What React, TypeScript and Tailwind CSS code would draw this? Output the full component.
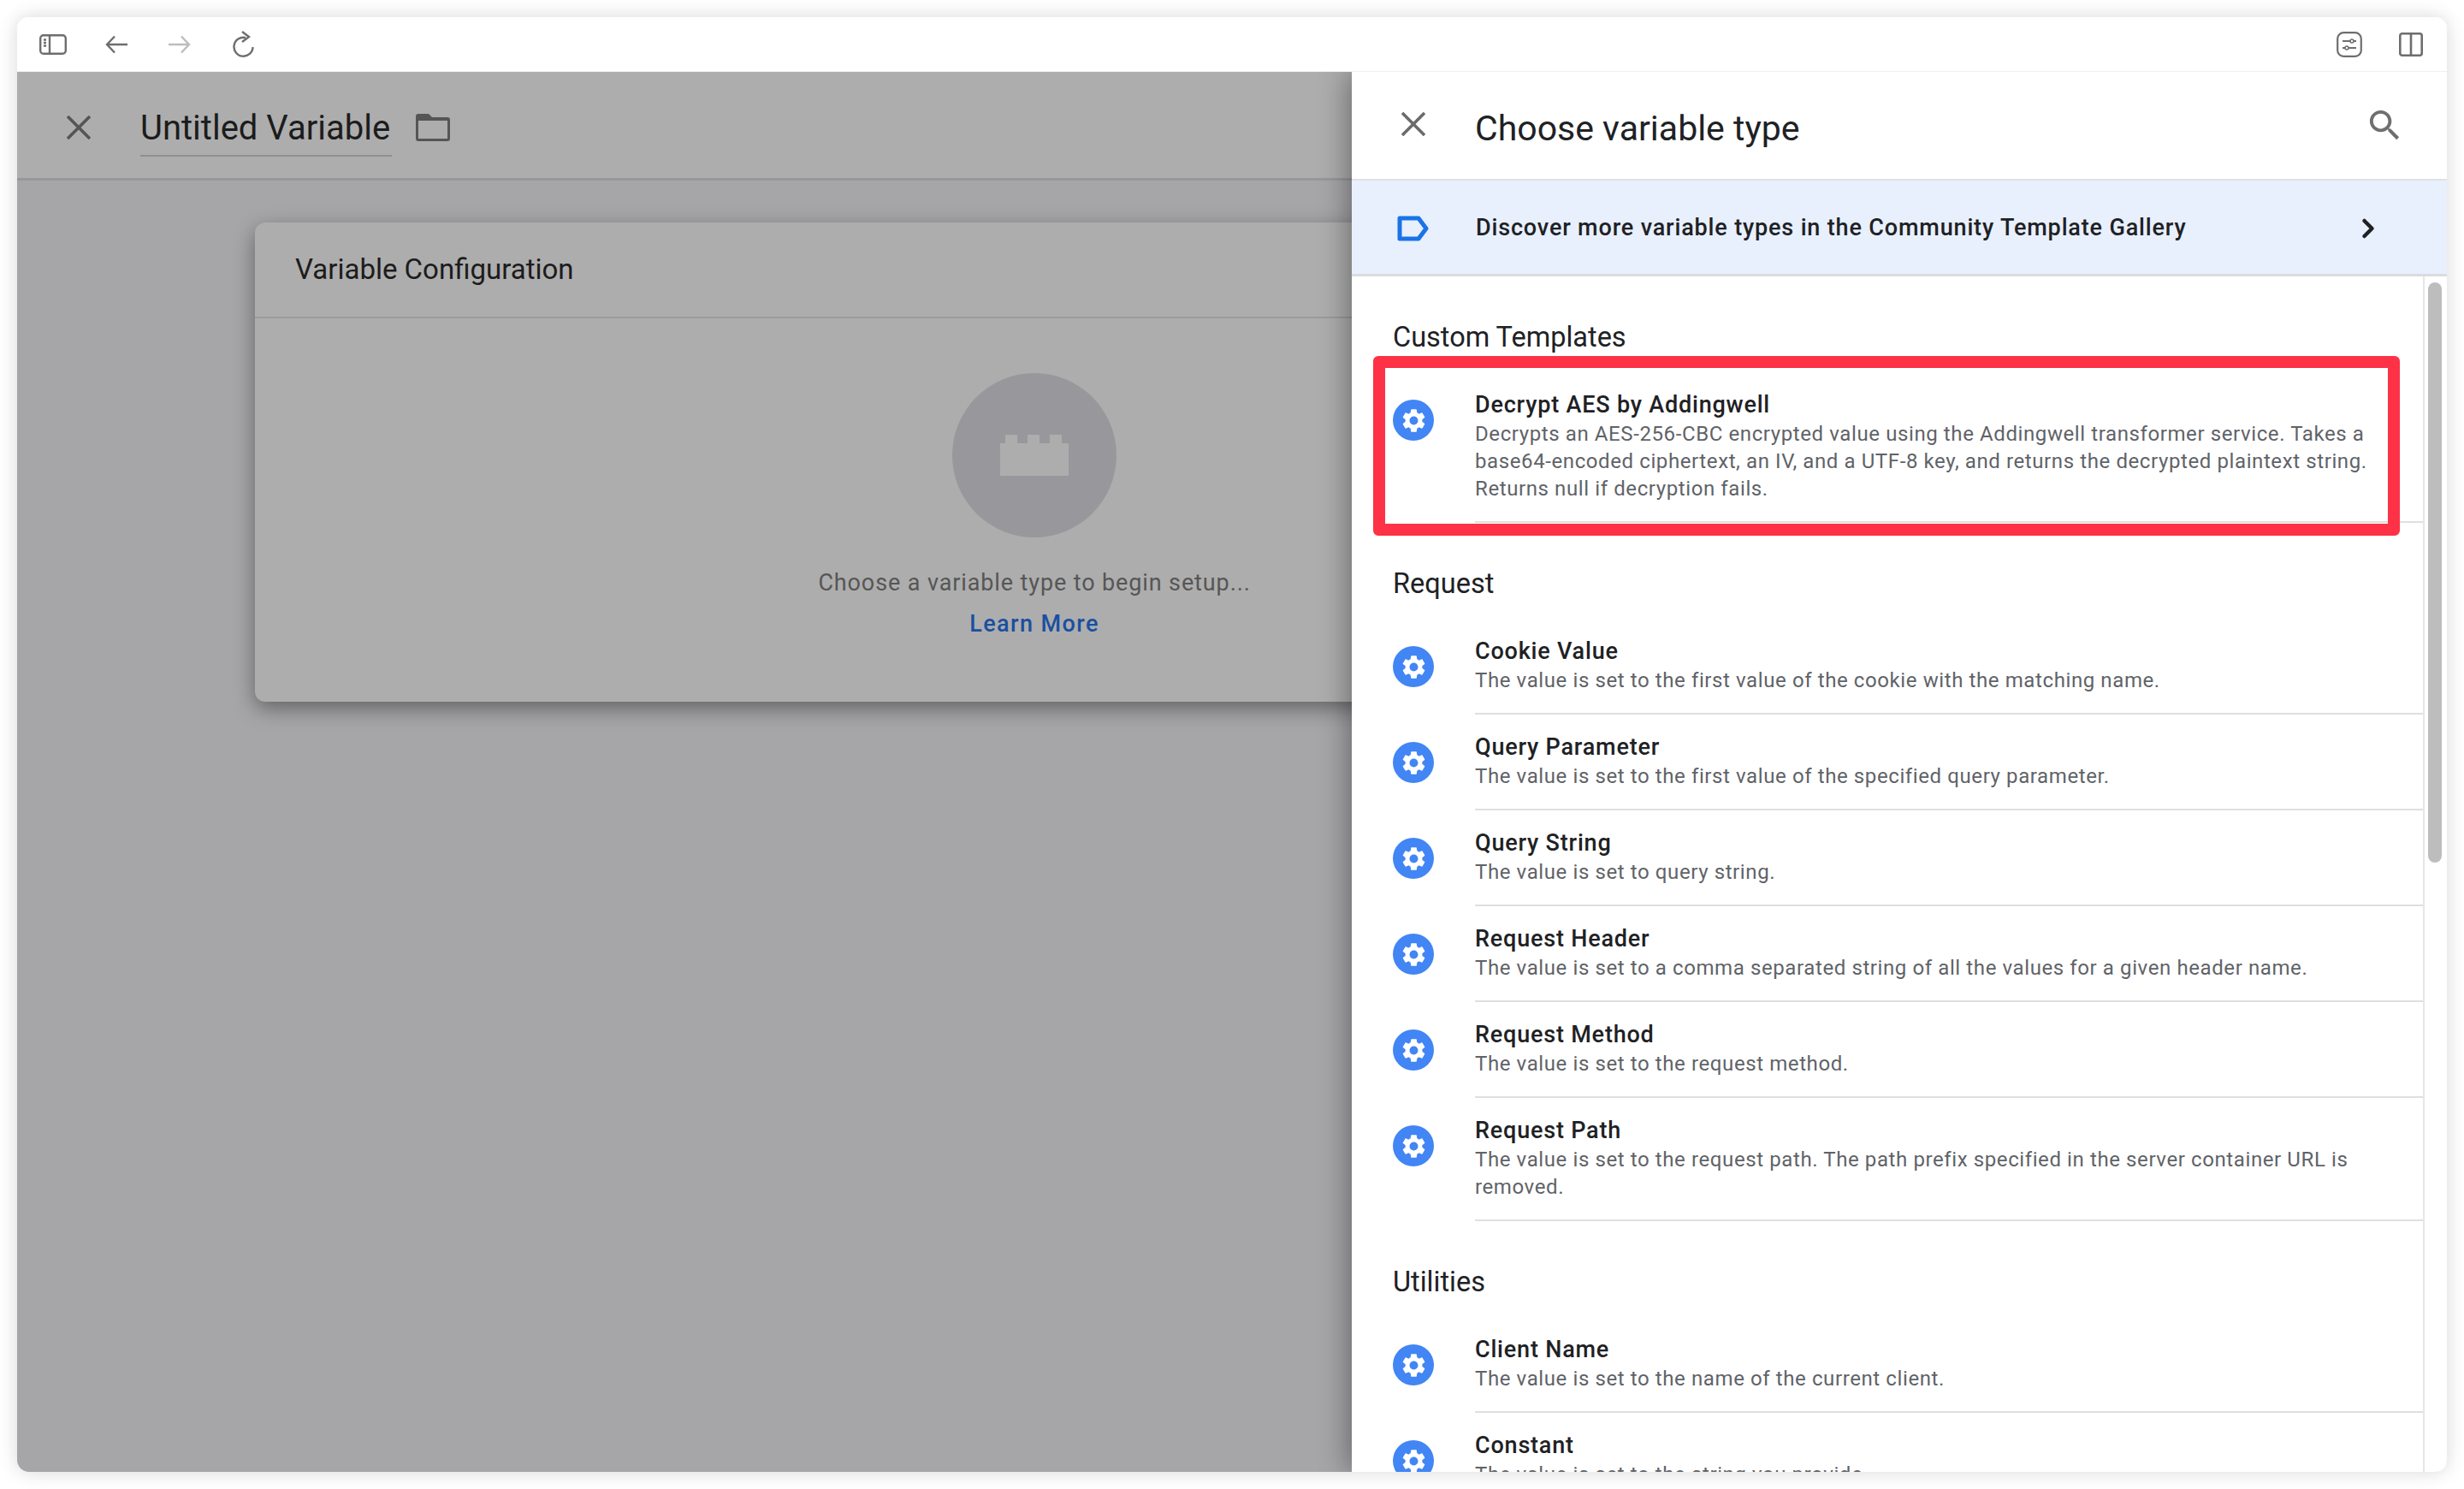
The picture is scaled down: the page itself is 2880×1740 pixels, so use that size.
import { ChevronRight } from 'lucide-react';

type Item = { title: string; desc: string };

const GEAR =
  'M19.14 12.94c.04-.3.06-.61.06-.94 0-.32-.02-.64-.07-.94l2.03-1.58c.18-.14.23-.41.12-.61l-1.92-3.32c-.12-.22-.37-.29-.59-.22l-2.39.96c-.5-.38-1.03-.7-1.62-.94L14.4 2.81c-.04-.24-.24-.41-.48-.41h-3.84c-.24 0-.43.17-.47.41L9.25 5.35c-.59.24-1.13.57-1.62.94l-2.39-.96c-.22-.08-.47 0-.59.22L2.74 8.87c-.12.21-.08.47.12.61l2.03 1.58c-.05.3-.09.63-.09.94s.02.64.07.94l-2.03 1.58c-.18.14-.23.41-.12.61l1.92 3.32c.12.22.37.29.59.22l2.39-.96c.5.38 1.03.7 1.62.94l.36 2.54c.05.24.24.41.48.41h3.84c.24 0 .44-.17.47-.41l.36-2.54c.59-.24 1.13-.56 1.62-.94l2.39.96c.22.08.47 0 .59-.22l1.92-3.32c.12-.22.07-.47-.12-.61l-2.01-1.58zM12 15.6c-1.98 0-3.6-1.62-3.6-3.6s1.62-3.6 3.6-3.6 3.6 1.62 3.6 3.6-1.62 3.6-3.6 3.6z';

const customTemplates: Item[] = [
  {
    title: 'Decrypt AES by Addingwell',
    desc: 'Decrypts an AES-256-CBC encrypted value using the Addingwell transformer service. Takes a base64-encoded ciphertext, an IV, and a UTF-8 key, and returns the decrypted plaintext string. Returns null if decryption fails.',
  },
];

const request: Item[] = [
  { title: 'Cookie Value', desc: 'The value is set to the first value of the cookie with the matching name.' },
  { title: 'Query Parameter', desc: 'The value is set to the first value of the specified query parameter.' },
  { title: 'Query String', desc: 'The value is set to query string.' },
  { title: 'Request Header', desc: 'The value is set to a comma separated string of all the values for a given header name.' },
  { title: 'Request Method', desc: 'The value is set to the request method.' },
  {
    title: 'Request Path',
    desc: 'The value is set to the request path. The path prefix specified in the server container URL is removed.',
  },
];

const utilities: Item[] = [
  { title: 'Client Name', desc: 'The value is set to the name of the current client.' },
  { title: 'Constant', desc: 'The value is set to the string you provide.' },
];

function CloseIcon({ color }: { color: string }) {
  return (
    <svg viewBox="0 0 28 28" fill="none" stroke={color} strokeWidth="3.6" className="h-[28px] w-[28px] shrink-0">
      <path d="M1 1l26 26M27 1 1 27" />
    </svg>
  );
}

function GearBadge() {
  return (
    <div className="mt-[32px] flex h-[48px] w-[48px] shrink-0 items-center justify-center rounded-full bg-[#4285f4]">
      <svg viewBox="0 0 24 24" className="h-[33px] w-[33px] fill-white">
        <path d={GEAR} />
      </svg>
    </div>
  );
}

function Row({ item }: { item: Item }) {
  return (
    <div className="flex gap-[48px] pl-[48px]">
      <GearBadge />
      <div className="min-w-0 flex-1 border-b-[2px] border-[#dfdfdf] pt-[21px] pb-[22px] pr-[50px]">
        <div className="text-[27px] leading-[34px] font-medium tracking-[0.8px] text-[#202124]">{item.title}</div>
        <div className="mt-[1px] text-[24px] leading-[32px] tracking-[0.6px] text-[#5f6368]">{item.desc}</div>
      </div>
    </div>
  );
}

function Section({ title, items }: { title: string; items: Item[] }) {
  return (
    <section>
      <h2 className="mb-[21px] pl-[48px] pt-[51px] text-[32.5px] leading-[40px] font-normal text-[#202124]">{title}</h2>
      {items.map((item) => (
        <Row key={item.title} item={item} />
      ))}
    </section>
  );
}

function LeftPane() {
  return (
    <div className="min-w-0 flex-1 overflow-hidden bg-[#a6a6a9]">
      <div className="flex h-[127px] border-b-[3px] border-[#98989b] bg-[#adadad]">
        <div className="ml-[58px] mt-[51px]">
          <CloseIcon color="#555555" />
        </div>
        <div className="ml-[58px] mt-[41px] self-start border-b-[2px] border-[#8f8f8f] pb-[6px] pr-[2px] text-[40px] leading-[50px] text-[#1c1c1c]">
          Untitled Variable
        </div>
        <svg viewBox="0 0 40 32" className="ml-[28px] mt-[49px] h-[32px] w-[40px] fill-[#555555]">
          <path d="M3 0h12l4 4h18a3 3 0 0 1 3 3v22a3 3 0 0 1-3 3H3a3 3 0 0 1-3-3V3a3 3 0 0 1 3-3zm0 8v21h34V8H3z" />
        </svg>
      </div>
      <div className="ml-[278px] mt-[49px] h-[560px] w-[1824px] rounded-[12px] bg-[#adadad] shadow-[0_8px_24px_rgba(0,0,0,0.4)]">
        <div className="flex h-[112px] items-center border-b-[2px] border-[#9b9b9b] pl-[47px] text-[33px] text-[#1c1c1c]">
          Variable Configuration
        </div>
        <div className="ml-[815px] flex w-[192px] flex-col items-center">
          <div className="mt-[64px] flex h-[192px] w-[192px] shrink-0 items-center justify-center rounded-full bg-[#98989c]">
            <svg viewBox="0 0 80 48" className="h-[48px] w-[80px] fill-[#adadad]">
              <path d="M0 10h6V0h14v10h12V0h14v10h12V0h14v10h8v38H0z" />
            </svg>
          </div>
          <div className="mt-[37px] whitespace-nowrap text-[27px] leading-[32px] tracking-[0.88px] text-[#565656]">
            Choose a variable type to begin setup...
          </div>
          <div className="mt-[16px] whitespace-nowrap text-[27px] leading-[32px] font-medium tracking-[1.4px] text-[#1a4fa0]">
            Learn More
          </div>
        </div>
      </div>
    </div>
  );
}

function RightPanel() {
  return (
    <div className="z-10 flex w-[1280px] shrink-0 flex-col bg-white shadow-[-4px_0_32px_rgba(0,0,0,0.38)]">
      <div className="flex h-[127px] shrink-0 items-center border-b-[2px] border-[#dfe1e5]">
        <div className="ml-[58px] mb-[3px]">
          <CloseIcon color="#6b6b6b" />
        </div>
        <div className="ml-[58px] flex-1 pt-[7px] text-[41px] leading-[50px] text-[#202124]">Choose variable type</div>
        <svg viewBox="0 0 24 24" className="mr-[49px] h-[47px] w-[47px] fill-[#6f6f6f]">
          <path d="M15.5 14h-.79l-.28-.27C15.41 12.59 16 11.11 16 9.5 16 5.91 13.09 3 9.5 3S3 5.91 3 9.5 5.91 16 9.5 16c1.61 0 3.09-.59 4.23-1.57l.27.28v.79l5 4.99L20.49 19l-4.99-5zm-6 0C7.01 14 5 11.99 5 9.5S7.01 5 9.5 5 14 7.01 14 9.5 11.99 14 9.5 14z" />
        </svg>
      </div>
      <div className="flex h-[112px] shrink-0 items-center border-b-[3px] border-[#dadce0] bg-[#e8f0fe]">
        <svg viewBox="0 0 38 30" fill="none" className="ml-[53px] mt-[2px] h-[30px] w-[38px]">
          <path d="M3 3h22l9 12-9 12H3z" stroke="#1a73e8" strokeWidth="5" strokeLinejoin="round" />
        </svg>
        <div className="ml-[54px] flex-1 pt-[1px] text-[27px] leading-[34px] font-medium tracking-[0.84px] text-[#202124]">
          Discover more variable types in the Community Template Gallery
        </div>
        <ChevronRight className="mr-[74px] mt-[2px] h-[36px] w-[36px] text-[#202124]" strokeWidth={3} />
      </div>
      <div className="flex min-h-0 flex-1 overflow-hidden">
        <div className="relative min-w-0 flex-1">
          <Section title="Custom Templates" items={customTemplates} />
          <Section title="Request" items={request} />
          <Section title="Utilities" items={utilities} />
          <div className="absolute left-[25px] top-[93px] h-[210px] w-[1200px] rounded-[6px] border-[14px] border-[#fd3246]" />
        </div>
        <div className="w-[28px] shrink-0 border-l-[2px] border-[#e6e6e6] pl-[4px] pt-[7px]">
          <div className="h-[678px] w-[16px] rounded-full bg-[#bdbdbd]" />
        </div>
      </div>
    </div>
  );
}

export default function App() {
  return (
    <div
      className="h-[1740px] w-[2880px] overflow-hidden bg-white p-[20px]"
      style={{ fontFamily: 'Roboto, sans-serif' }}
    >
      <div className="flex h-[1700px] flex-col overflow-hidden rounded-[14px] shadow-[0_0_22px_rgba(0,0,0,0.16)]">
        <div className="relative z-20 flex h-[64px] shrink-0 items-center border-b border-[#f0f0f0] bg-white">
          <svg viewBox="0 0 32 24" fill="none" stroke="#6e6e6e" strokeWidth="2.4" className="ml-[26px] h-[24px] w-[32px]">
            <rect x="1.2" y="1.2" width="29.6" height="21.6" rx="3.5" />
            <path d="M12 1.2v21.6M5 6.5h3M5 10h3M5 13.5h3" />
          </svg>
          <svg viewBox="0 0 26 22" fill="none" stroke="#6e6e6e" strokeWidth="2.4" className="ml-[45px] h-[22px] w-[26px]">
            <path d="M26 11H2M11 1.5 2 11l9 9.5" />
          </svg>
          <svg viewBox="0 0 26 22" fill="none" stroke="#bdbdbd" strokeWidth="2.4" className="ml-[48px] h-[22px] w-[26px]">
            <path d="M0 11h24M15 1.5l9 9.5-9 9.5" />
          </svg>
          <svg viewBox="0 0 26 32" fill="none" stroke="#6e6e6e" strokeWidth="2.4" className="ml-[49px] h-[32px] w-[26px]">
            <path d="M15 8A11 11 0 1 0 23.5 19M11 1l8 6-8 6" />
          </svg>
          <div className="flex-1" />
          <svg viewBox="0 0 30 30" fill="none" stroke="#6e6e6e" strokeWidth="2.2" className="h-[30px] w-[30px]">
            <rect x="1.2" y="1.2" width="27.6" height="27.6" rx="7" />
            <path d="M7 11h9M20 11h3M7 19h3M14 19h9" strokeWidth="1.8" />
            <circle cx="18" cy="11" r="2" strokeWidth="1.6" />
            <circle cx="12" cy="19" r="2" strokeWidth="1.6" />
          </svg>
          <svg viewBox="0 0 28 28" fill="none" stroke="#6e6e6e" strokeWidth="2.6" className="ml-[43px] mr-[28px] h-[28px] w-[28px]">
            <rect x="1.3" y="1.3" width="25.4" height="25.4" rx="2.5" />
            <path d="M14 1.3v25.4" />
          </svg>
        </div>
        <div className="flex min-h-0 flex-1">
          <LeftPane />
          <RightPanel />
        </div>
      </div>
    </div>
  );
}
